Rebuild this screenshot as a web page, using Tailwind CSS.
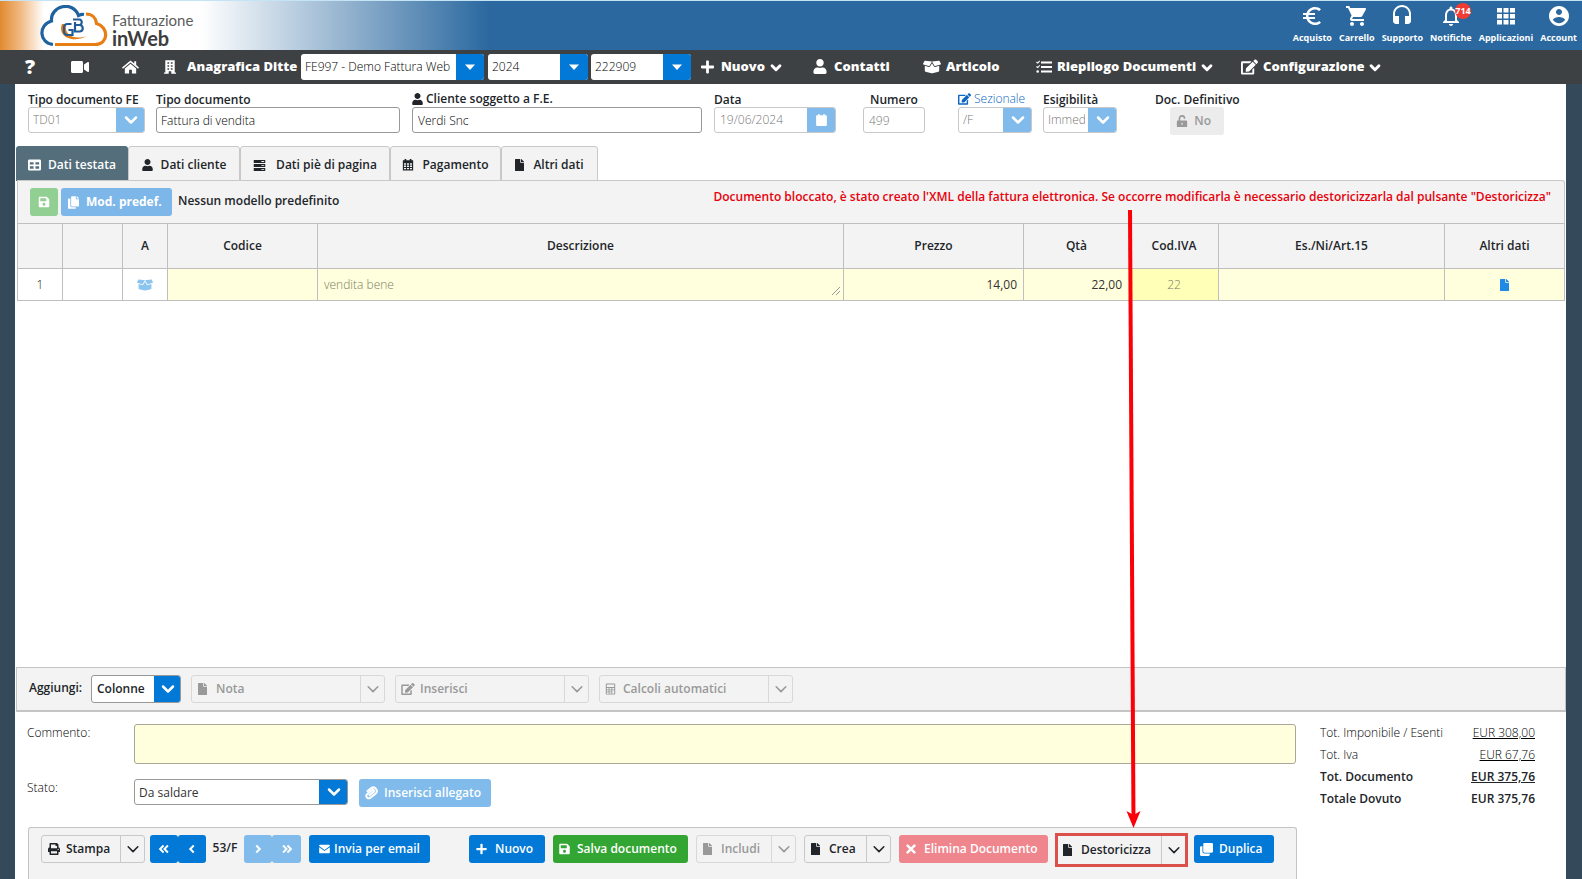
<!DOCTYPE html>
<html lang="it">
<head>
<meta charset="utf-8">
<title>Fatturazione inWeb</title>
<script src="https://cdn.jsdelivr.net/npm/@tailwindcss/browser@4"></script>
</head>
<body class="relative flex min-h-screen flex-col overflow-x-hidden bg-[#34495a] font-['Open_Sans','Noto_Sans',sans-serif] text-xs text-[#212529]">

<svg class="hidden" aria-hidden="true">
  <symbol id="user" viewBox="0 0 448 512"><path d="M224 256c70.7 0 128-57.3 128-128S294.7 0 224 0 96 57.3 96 128s57.3 128 128 128zm89.6 32h-16.7c-22.2 10.2-46.9 16-72.9 16s-50.6-5.8-72.9-16h-16.7C60.2 288 0 348.2 0 422.4V464c0 26.5 21.5 48 48 48h352c26.5 0 48-21.5 48-48v-41.6c0-74.2-60.2-134.4-134.4-134.4z"/></symbol>
  <symbol id="file" viewBox="0 0 384 512"><path d="M224 136V0H24C10.700 0 0 10.700 0 24v464c0 13.300 10.700 24 24 24h336c13.300 0 24-10.700 24-24V160H248c-13.200 0-24-10.800-24-24zm160-14.100v6.100H256V0h6.100c6.400 0 12.500 2.500 17 7l97.900 98c4.500 4.500 7 10.600 7 16.900z"/></symbol>
  <symbol id="save" viewBox="0 0 448 512"><path d="M433.941 129.941l-83.882-83.882A48 48 0 0 0 316.118 32H48C21.490 32 0 53.490 0 80v352c0 26.510 21.490 48 48 48h352c26.510 0 48-21.490 48-48V163.882a48 48 0 0 0-14.059-33.941zM224 416c-35.346 0-64-28.654-64-64 0-35.346 28.654-64 64-64s64 28.654 64 64c0 35.346-28.654 64-64 64zm96-304.520V212c0 6.627-5.373 12-12 12H76c-6.627 0-12-5.373-12-12V108c0-6.627 5.373-12 12-12h228.520c3.183 0 6.235 1.264 8.485 3.515l3.480 3.480A11.996 11.996 0 0 1 320 111.480z"/></symbol>
  <symbol id="copy" viewBox="0 0 448 512"><path d="M320 448v40c0 13.255-10.745 24-24 24H24c-13.255 0-24-10.745-24-24V120c0-13.255 10.745-24 24-24h72v296c0 30.879 25.121 56 56 56h168zm0-344V0H152c-13.255 0-24 10.745-24 24v368c0 13.255 10.745 24 24 24h272c13.255 0 24-10.745 24-24V128H344c-13.200 0-24-10.800-24-24zm120.971-31.029L375.029 7.029A24 24 0 0 0 358.059 0H352v96h96v-6.059a24 24 0 0 0-7.029-16.970z"/></symbol>
  <symbol id="clone" viewBox="0 0 512 512"><path d="M464 0c26.510 0 48 21.490 48 48v288c0 26.510-21.490 48-48 48H176c-26.510 0-48-21.490-48-48V48c0-26.510 21.490-48 48-48h288M176 416c-44.112 0-80-35.888-80-80V128H48c-26.510 0-48 21.490-48 48v288c0 26.510 21.490 48 48 48h288c26.510 0 48-21.490 48-48v-48H176z"/></symbol>
  <symbol id="plus" viewBox="0 0 448 512"><path d="M416 208H272V64c0-17.670-14.330-32-32-32h-32c-17.670 0-32 14.330-32 32v144H32c-17.670 0-32 14.330-32 32v32c0 17.670 14.330 32 32 32h144v144c0 17.670 14.330 32 32 32h32c17.670 0 32-14.330 32-32V304h144c17.670 0 32-14.330 32-32v-32c0-17.670-14.330-32-32-32z"/></symbol>
  <symbol id="video" viewBox="0 0 576 512"><path d="M336.200 64H47.800C21.400 64 0 85.400 0 111.800v288.400C0 426.600 21.400 448 47.800 448h288.400c26.400 0 47.800-21.400 47.800-47.800V111.800c0-26.400-21.400-47.800-47.800-47.800zm189.400 37.700L416 177.300v157.400l109.600 75.500c21.200 14.600 50.400-.3 50.400-25.800V127.500c0-25.400-29.100-40.400-50.400-25.800z"/></symbol>
  <symbol id="print" viewBox="0 0 512 512"><path d="M448 192V77.250c0-8.490-3.370-16.620-9.370-22.630L393.370 9.370c-6-6-14.140-9.370-22.630-9.370H96C78.330 0 64 14.330 64 32v160c-35.350 0-64 28.650-64 64v112c0 8.840 7.160 16 16 16h48v96c0 17.670 14.330 32 32 32h320c17.670 0 32-14.330 32-32v-96h48c8.840 0 16-7.160 16-16V256c0-35.350-28.650-64-64-64zm-64 256H128v-96h256v96zm0-224H128V64h192v48c0 8.840 7.160 16 16 16h48v96zm48 72c-13.250 0-24-10.750-24-24 0-13.260 10.750-24 24-24s24 10.740 24 24c0 13.250-10.750 24-24 24z"/></symbol>
  <symbol id="edit" viewBox="0 0 576 512"><path d="M402.600 83.200l90.200 90.200c3.800 3.800 3.800 10 0 13.800L274.400 405.600l-92.800 10.300c-12.400 1.400-22.900-9.100-21.500-21.500l10.300-92.800L388.800 83.200c3.800-3.800 10-3.800 13.800 0zm162-22.900l-48.800-48.800c-15.200-15.200-39.900-15.200-55.200 0l-35.400 35.400c-3.800 3.800-3.800 10 0 13.800l90.200 90.200c3.800 3.800 10 3.800 13.800 0l35.400-35.400c15.200-15.300 15.200-40 0-55.200zM384 346.200V448H64V128h229.800c3.200 0 6.200-1.300 8.500-3.500l40-40c7.600-7.600 2.200-20.500-8.500-20.500H48C21.500 64 0 85.500 0 112v352c0 26.500 21.500 48 48 48h352c26.500 0 48-21.500 48-48V306.200c0-10.700-12.900-16-20.500-8.500l-40 40c-2.200 2.300-3.500 5.300-3.500 8.500z"/></symbol>
  <symbol id="box" viewBox="0 0 640 512"><path d="M425.700 256c-16.900 0-32.800-9-41.400-23.400L320 126l-64.200 106.600c-8.700 14.500-24.600 23.500-41.500 23.500-4.500 0-9-.6-13.300-1.900L64 215v178c0 14.700 10 27.500 24.200 31l216.200 54.100c10.200 2.500 20.900 2.500 31 0L551.800 424c14.200-3.600 24.200-16.400 24.200-31V215l-137 39.100c-4.300 1.300-8.800 1.900-13.300 1.900zm212.600-112.200L586.800 41c-3.100-6.200-9.800-9.800-16.700-8.900L320 64l91.700 152.100c3.800 6.300 11.400 9.300 18.500 7.300l197.900-56.500c9.900-2.900 14.700-13.900 10.200-23.100zM53.200 41L1.700 143.800c-4.600 9.200.3 20.200 10.100 23l197.900 56.500c7.100 2 14.700-1 18.500-7.300L320 64 69.800 32.100c-6.900-.8-13.500 2.700-16.600 8.900z"/></symbol>
  <symbol id="chev" viewBox="0 0 16 16"><path d="M3 5.500l5 5 5-5" fill="none" stroke="currentColor" stroke-width="2.500" stroke-linecap="round" stroke-linejoin="round"/></symbol>
  <symbol id="chevbold" viewBox="0 0 16 16"><path d="M3.500 5.500L8 10l4.500-4.500" fill="none" stroke="currentColor" stroke-width="3.400" stroke-linecap="round" stroke-linejoin="round"/></symbol>
  <symbol id="chevthin" viewBox="0 0 16 16"><path d="M2.500 5.500L8 11l5.500-5.500" fill="none" stroke="currentColor" stroke-width="1.800" stroke-linecap="round" stroke-linejoin="round"/></symbol>
  <symbol id="caret" viewBox="0 0 16 16"><path d="M3 5.500h10L8 11z"/></symbol>
  <symbol id="home" viewBox="0 0 18 16"><path d="M9 1L0 8.600l1 1.200L9 3.200l8 6.600 1-1.200-3-2.600V2h-2v2.300z"/><path d="M9 4.500L3 9.500V15h4.500v-4h3v4H15V9.500z"/></symbol>
  <symbol id="building" viewBox="0 0 14 16"><path fill-rule="evenodd" d="M1.500 0h11v14.500H14V16H8.500v-3h-3v3H0v-1.500h1.500zM4 2.500v1.800h2V2.500zm4 0v1.800h2V2.500zM4 6v1.800h2V6zm4 0v1.800h2V6zM4 9.500v1.800h2V9.500zm4 0v1.800h2V9.500z"/></symbol>
  <symbol id="list" viewBox="0 0 16 14"><path d="M5 1.500h11v2H5zM5 6h11v2H5zM5 10.500h11v2H5z"/><path d="M0 2.500l1-1 .8.800L3.400.5l.7.700L1.800 3.800zM0 7l1-1 .8.800 1.600-1.800.7.700L1.800 8.300z"/><circle cx="1.700" cy="11.500" r="1.300"/></symbol>
  <symbol id="grid" viewBox="0 0 14 12"><path fill-rule="evenodd" d="M1.500 0h11A1.500 1.500 0 0 1 14 1.500v9a1.500 1.500 0 0 1-1.500 1.500h-11A1.500 1.500 0 0 1 0 10.500v-9A1.500 1.500 0 0 1 1.500 0zM2 3v2.500h4V3zm6 0v2.500h4V3zM2 7.300V10h4V7.300zm6 0V10h4V7.300z"/></symbol>
  <symbol id="server" viewBox="0 0 14 14"><path fill-rule="evenodd" d="M.8 1h12.400v3.200H.8zM.8 5.400h12.400v3.200H.8zM.8 9.800h12.400V13H.8zM9 2.200v.9h3v-.9zm0 4.400v.9h3v-.9zM9 11v.9h3V11z"/></symbol>
  <symbol id="calgrid" viewBox="0 0 14 14"><path fill-rule="evenodd" d="M3 0h2v1.500h4V0h2v1.500h2V13.500H1V1.500h2zM2.300 5v1.700h2.400V5zm3.500 0v1.700h2.400V5zm3.500 0v1.700h2.400V5zM2.300 7.700v1.600h2.400V7.700zm3.500 0v1.600h2.400V7.700zm3.500 0v1.600h2.400V7.700zM2.300 10.400V12h2.400v-1.600zm3.500 0V12h2.400v-1.600zm3.500 0V12h2.400v-1.600z"/></symbol>
  <symbol id="cal" viewBox="0 0 14 14"><path d="M2 2h1.500V.5h1.500V2h4V.5h1.500V2H12a.8.800 0 0 1 .8.800V12.500a1 1 0 0 1-1 1H2.200a1 1 0 0 1-1-1V2.800A.8.800 0 0 1 2 2z"/></symbol>
  <symbol id="calc" viewBox="0 0 14 14"><path fill-rule="evenodd" d="M2 0h10a1 1 0 0 1 1 1v12a1 1 0 0 1-1 1H2a1 1 0 0 1-1-1V1a1 1 0 0 1 1-1zm.3 1.300v3h9.400v-3zm0 4.400v1.800h2.300V5.700zm3.500 0v1.800h2.300V5.700zm3.500 0v1.800h2.400V5.700zm-7 2.800v1.700h2.300V8.500zm3.500 0v1.700h2.300V8.500zm-3.500 2.700V13h2.300v-1.800zm3.500 0V13h2.300v-1.800zm3.500-2.700V13h2.400V8.500z"/></symbol>
  <symbol id="unlock" viewBox="0 0 14 14"><path d="M4 7V4a3 3 0 0 1 6 0v.5" fill="none" stroke="currentColor" stroke-width="1.800"/><path fill-rule="evenodd" d="M2 6.500h10a1 1 0 0 1 1 1V13a1 1 0 0 1-1 1H2a1 1 0 0 1-1-1V7.500a1 1 0 0 1 1-1zM6.300 9v2.500h1.400V9z"/></symbol>
  <symbol id="clip" viewBox="0 0 16 16"><path d="M6 11.500l4.800-5a1.300 1.300 0 0 0-1.900-1.800L4 9.800a2.700 2.700 0 0 0 3.900 3.800l5.300-5.500a4 4 0 0 0-5.700-5.600L3 7.200" transform="rotate(8 8 8)" fill="none" stroke="currentColor" stroke-width="2.300"/></symbol>
  <symbol id="mail" viewBox="0 0 14 12"><path d="M1.200.5h11.600a1 1 0 0 1 1 1v.8L7 7.200.2 2.300v-.8a1 1 0 0 1 1-1z"/><path d="M.2 3.700L7 8.600l6.800-4.900v6.800a1 1 0 0 1-1 1H1.200a1 1 0 0 1-1-1z"/></symbol>
  <symbol id="times" viewBox="0 0 14 14"><path d="M3 3l8 8M11 3l-8 8" stroke="currentColor" stroke-width="3" stroke-linecap="round"/></symbol>
  <symbol id="left" viewBox="0 0 16 16"><path d="M10 4L6 8l4 4" fill="none" stroke="currentColor" stroke-width="2.300"/></symbol>
  <symbol id="dleft" viewBox="0 0 16 16"><path d="M7.500 4l-4 4 4 4M12.500 4l-4 4 4 4" fill="none" stroke="currentColor" stroke-width="2.200"/></symbol>
</svg>

<header class="flex h-[50px] items-center justify-between border-t border-[#c4e4f5] bg-[linear-gradient(to_right,#e18a30_0px,#f0b880_20px,#ffffff_44px,#ffffff_200px,#2a689f_490px)]">
  <a href="#" class="ml-10 flex items-center gap-1" aria-label="Fatturazione inWeb">
    <svg class="h-[42px] w-[68px]" viewBox="0 0 68 42" fill="none" stroke-width="3.200">
      <path d="M13 39.500C-1 38-2 20 11.500 16 10 1 33-5 38.500 10.500c2-1 4-1.300 5.500-1" stroke="#1f62a0"/>
      <path d="M46 9c6 0 10 4 10.500 9.500C69 22 69 39 55 39.500H15" stroke="#e87d13"/>
      <path d="M22 19c-5 12 10 20 25 12-12 4-23 0-21-12" fill="#e87d13" stroke="none"/>
      <path d="M31.500 19h-4.500a3.500 3.500 0 0 0-3 3.500v4a3.500 3.500 0 0 0 3.500 3.500h5v-5h-4M33 14.500h7a3 3 0 0 1 0 5.500h-4.500m4.500 0a3.300 3.300 0 0 1 0 6.500h-5V17" stroke="#1f5c98" stroke-width="2.200"/>
    </svg>
    <span class="flex flex-col pt-2 font-[Lato,sans-serif]">
      <span class="text-[15px] leading-[16px] text-[#5c5c5c]">Fatturazione</span>
      <span class="text-[20px] leading-[20px] font-bold text-[#3d3d3d]">inWeb</span>
    </span>
  </a>
  <nav class="mr-[5px] flex gap-[7px] pb-1 text-[9px] font-bold leading-[12px] text-white" aria-label="Servizi">
    <a href="#" class="flex flex-col items-center gap-1"><svg class="size-[24px]" fill="currentColor" viewBox="0 0 24 24"><path d="M15 18.500c-2.510 0-4.680-1.420-5.760-3.500H15v-2H8.580c-.05-.33-.08-.66-.08-1s.03-.67.08-1H15V9H9.240C10.320 6.920 12.500 5.500 15 5.500c1.610 0 3.090.59 4.230 1.570L21 5.300C19.410 3.870 17.300 3 15 3c-3.920 0-7.240 2.510-8.480 6H3v2h3.060c-.04.33-.06.66-.06 1s.02.67.06 1H3v2h3.520c1.240 3.490 4.560 6 8.480 6 2.310 0 4.410-.87 6-2.300l-1.780-1.770c-1.130.98-2.600 1.570-4.220 1.570z"/></svg>Acquisto</a>
    <a href="#" class="flex flex-col items-center gap-1"><svg class="size-[24px]" fill="currentColor" viewBox="0 0 24 24"><path d="M7 18c-1.100 0-1.990.9-1.990 2S5.900 22 7 22s2-.9 2-2-.9-2-2-2zM1 2v2h2l3.600 7.590-1.350 2.450c-.16.28-.25.61-.25.96 0 1.100.9 2 2 2h12v-2H7.420c-.14 0-.25-.11-.25-.25l.03-.12.9-1.630h7.450c.75 0 1.410-.41 1.750-1.030l3.580-6.490c.08-.14.12-.31.12-.48 0-.55-.45-1-1-1H5.210l-.94-2H1zm16 16c-1.100 0-1.990.9-1.990 2s.89 2 1.990 2 2-.9 2-2-.9-2-2-2z"/></svg>Carrello</a>
    <a href="#" class="flex flex-col items-center gap-1"><svg class="size-[24px]" fill="currentColor" viewBox="0 0 24 24"><path d="M12 1c-4.970 0-9 4.030-9 9v7c0 1.660 1.340 3 3 3h3v-8H5v-2c0-3.870 3.130-7 7-7s7 3.130 7 7v2h-4v8h3c1.660 0 3-1.340 3-3v-7c0-4.970-4.030-9-9-9z"/></svg>Supporto</a>
    <a href="#" class="relative flex flex-col items-center gap-1"><svg class="size-[24px]" fill="currentColor" viewBox="0 0 24 24"><path d="M12 22c1.100 0 2-.9 2-2h-4c0 1.100.9 2 2 2zm6-6v-5c0-3.070-1.630-5.640-4.500-6.320V4c0-.83-.67-1.500-1.500-1.500s-1.500.67-1.500 1.500v.68C7.640 5.360 6 7.920 6 11v5l-2 2v1h16v-1l-2-2zm-2 1H8v-6c0-2.480 1.510-4.500 4-4.500s4 2.020 4 4.500v6z"/></svg>Notifiche<span class="absolute -top-px left-[25px] flex size-4 items-center justify-center rounded-full bg-[#f03c32] text-[9px]">714</span></a>
    <a href="#" class="flex flex-col items-center gap-1"><svg class="size-[24px]" fill="currentColor" viewBox="0 0 24 24"><path d="M3 8.500h5V4H3zM9.500 20.500h5V16h-5zM3 20.500h5V16H3zm0-6h5V10H3zm6.500 0h5V10h-5zM16 4v4.500h5V4zM9.500 8.500h5V4h-5zm6.500 6h5V10h-5zm0 6h5V16h-5z"/></svg>Applicazioni</a>
    <a href="#" class="flex flex-col items-center gap-1"><svg class="size-[24px]" fill="currentColor" viewBox="0 0 24 24"><path d="M12 2C6.480 2 2 6.480 2 12s4.480 10 10 10 10-4.480 10-10S17.520 2 12 2zm0 3c1.660 0 3 1.340 3 3s-1.340 3-3 3-3-1.340-3-3 1.340-3 3-3zm0 14.200c-2.500 0-4.710-1.280-6-3.220.03-1.990 4-3.080 6-3.080 1.990 0 5.970 1.090 6 3.080-1.290 1.940-3.500 3.220-6 3.220z"/></svg>Account</a>
  </nav>
</header>

<nav class="flex h-[34px] items-center whitespace-nowrap bg-[#3e4143] text-[13px] font-extrabold text-white" aria-label="Menu principale">
  <a href="#" class="ml-[25px] w-[46px] text-[20px]">?</a>
  <a href="#" class="w-[51px]" aria-label="Video"><svg class="h-4 w-[18px]" fill="currentColor"><use href="#video"/></svg></a>
  <a href="#" class="w-[42px]" aria-label="Home"><svg class="h-4 w-[17px]" fill="currentColor"><use href="#home"/></svg></a>
  <a href="#" class="flex w-[137px] items-center gap-[11px]"><svg class="h-4 w-3" fill="currentColor"><use href="#building"/></svg>Anagrafica Ditte</a>
  <div class="flex h-[26px] w-[183px] overflow-hidden rounded-[3px] bg-white text-xs font-light text-black">
    <select aria-label="Ditta" class="min-w-0 flex-1 appearance-none px-1"><option>FE997 - Demo Fattura Web</option></select>
    <button aria-label="Apri ditta" class="flex w-[28px] items-center justify-center bg-[#0278d7] text-white"><svg class="size-4" fill="currentColor"><use href="#caret"/></svg></button>
  </div>
  <div class="ml-[4px] flex h-[26px] w-[100px] overflow-hidden rounded-[3px] bg-white text-xs font-light text-black">
    <select aria-label="Anno" class="min-w-0 flex-1 appearance-none px-1"><option>2024</option></select>
    <button aria-label="Apri anno" class="flex w-[28px] items-center justify-center bg-[#0278d7] text-white"><svg class="size-4" fill="currentColor"><use href="#caret"/></svg></button>
  </div>
  <div class="ml-[3px] flex h-[26px] w-[100px] overflow-hidden rounded-[3px] bg-white text-xs font-light text-black">
    <select aria-label="Codice" class="min-w-0 flex-1 appearance-none px-1"><option>222909</option></select>
    <button aria-label="Apri codice" class="flex w-[28px] items-center justify-center bg-[#0278d7] text-white"><svg class="size-4" fill="currentColor"><use href="#caret"/></svg></button>
  </div>
  <a href="#" class="ml-[10px] flex w-[112px] items-center"><svg class="mr-[7px] h-4 w-[13px]" fill="currentColor"><use href="#plus"/></svg>Nuovo<svg class="ml-[4px] mt-[3px] size-[14px]" fill="currentColor"><use href="#chevbold"/></svg></a>
  <a href="#" class="flex w-[110px] items-center gap-[7px]"><svg class="h-[15px] w-[14px]" fill="currentColor"><use href="#user"/></svg>Contatti</a>
  <a href="#" class="flex w-[113px] items-center gap-[5px]"><svg class="h-4 w-[18px]" fill="currentColor"><use href="#box"/></svg>Articolo</a>
  <a href="#" class="flex w-[205px] items-center"><svg class="mr-[5px] h-[14px] w-4" fill="currentColor"><use href="#list"/></svg>Riepilogo Documenti<svg class="ml-[4px] mt-[3px] size-[14px]" fill="currentColor"><use href="#chevbold"/></svg></a>
  <a href="#" class="flex items-center"><svg class="mr-[5px] h-4 w-[17px]" fill="currentColor"><use href="#edit"/></svg>Configurazione<svg class="ml-[3px] mt-[3px] size-[14px]" fill="currentColor"><use href="#chevbold"/></svg></a>
</nav>

<main class="mr-4 ml-[15px] flex flex-1 flex-col bg-white">
  <form class="flex h-[62px] items-start pt-[7px] pl-[13px] whitespace-nowrap">
    <div class="w-[128px]">
      <label for="tipofe" class="block h-4 font-semibold leading-[18px]">Tipo documento FE</label>
      <div class="flex h-[26px] w-[117px] overflow-hidden rounded-[3px] border border-[#c8c8c8] font-light text-[#777]">
        <select id="tipofe" disabled class="min-w-0 flex-1 appearance-none px-1"><option>TD01</option></select>
        <button type="button" disabled aria-label="Apri" class="-m-px flex w-[29px] items-center justify-center bg-[#80bbeb] text-white"><svg class="size-4"><use href="#chev"/></svg></button>
      </div>
    </div>
    <div class="w-[256px]">
      <label for="tipo" class="block h-4 font-semibold leading-[18px]">Tipo documento</label>
      <input id="tipo" value="Fattura di vendita" class="block h-[26px] w-[244px] rounded-[3px] border border-[#999] px-1 font-light text-black">
    </div>
    <div class="w-[302px]">
      <label for="cliente" class="flex h-4 items-center gap-[3px] font-semibold leading-[18px]"><svg class="h-[12px] w-[11px]" fill="currentColor"><use href="#user"/></svg>Cliente soggetto a F.E.</label>
      <input id="cliente" value="Verdi Snc" class="block h-[26px] w-[290px] rounded-[3px] border border-[#999] px-[5px] font-light text-black">
    </div>
    <div class="w-[149px]">
      <label for="data" class="block h-4 font-semibold leading-[18px]">Data</label>
      <div class="flex h-[26px] w-[122px] overflow-hidden rounded-[3px] border border-[#c8c8c8] font-light text-[#777]">
        <input id="data" disabled value="19/06/2024" class="min-w-0 flex-1 px-[5px]">
        <button type="button" disabled aria-label="Calendario" class="-m-px flex w-[29px] items-center justify-center bg-[#80bbeb] text-white"><svg class="h-[14px] w-[13px]" fill="currentColor"><use href="#cal"/></svg></button>
      </div>
    </div>
    <div class="w-[95px]">
      <label for="numero" class="block h-4 w-[62px] text-center font-semibold leading-[18px]">Numero</label>
      <input id="numero" disabled value="499" class="block h-[26px] w-[62px] rounded-[3px] border border-[#c8c8c8] px-[5px] font-light text-[#777]">
    </div>
    <div class="w-[85px]">
      <label for="sezionale" class="flex h-4 items-center gap-[3px] leading-[18px] font-light text-[#0a66c0]"><svg class="h-[12px] w-[13px]" fill="currentColor"><use href="#edit"/></svg>Sezionale</label>
      <div class="flex h-[26px] w-[74px] overflow-hidden rounded-[3px] border border-[#c8c8c8] font-light text-[#777]">
        <select id="sezionale" disabled class="min-w-0 flex-1 appearance-none px-1"><option>/F</option></select>
        <button type="button" disabled aria-label="Apri" class="-m-px flex w-[29px] items-center justify-center bg-[#80bbeb] text-white"><svg class="size-4"><use href="#chev"/></svg></button>
      </div>
    </div>
    <div class="w-[112px]">
      <label for="esig" class="block h-4 font-semibold leading-[18px]">Esigibilità</label>
      <div class="flex h-[26px] w-[74px] overflow-hidden rounded-[3px] border border-[#c8c8c8] font-light text-[#777]">
        <input id="esig" disabled value="Immediata" class="ml-1 w-[37px] min-w-0"><span class="flex-1"></span>
        <button type="button" disabled aria-label="Apri" class="-m-px flex w-[29px] items-center justify-center bg-[#80bbeb] text-white"><svg class="size-4"><use href="#chev"/></svg></button>
      </div>
    </div>
    <div class="flex flex-col items-center">
      <span class="block h-4 font-semibold leading-[18px]">Doc. Definitivo</span>
      <button type="button" disabled class="flex h-7 w-[54px] items-center gap-[6px] rounded-[3px] bg-[#ececec] px-[6px] font-semibold text-[#999]"><svg class="size-3" fill="currentColor"><use href="#unlock"/></svg>No</button>
    </div>
  </form>

  <div class="flex h-[35px] items-stretch whitespace-nowrap pl-px text-xs font-semibold [&>button]:pt-[3px]" role="tablist">
    <button role="tab" aria-selected="true" class="flex w-[112px] items-center justify-center gap-[7px] rounded-t-[3px] bg-[#546f7b] text-white"><svg class="h-3 w-[13px]" fill="currentColor"><use href="#grid"/></svg>Dati testata</button>
    <button role="tab" class="flex w-[112px] items-center justify-center gap-2 rounded-t-[3px] border border-[#c8c8c8] bg-[#f3f3f3]"><svg class="h-3 w-[11px]" fill="currentColor"><use href="#user"/></svg>Dati cliente</button>
    <button role="tab" class="flex w-[150px] items-center justify-center gap-[10px] rounded-t-[3px] border border-[#c8c8c8] bg-[#f3f3f3]"><svg class="size-[13px]" fill="currentColor"><use href="#server"/></svg>Dati piè di pagina</button>
    <button role="tab" class="flex w-[111px] items-center justify-center gap-[8px] rounded-t-[3px] border border-[#c8c8c8] bg-[#f3f3f3]"><svg class="size-3" fill="currentColor"><use href="#calgrid"/></svg>Pagamento</button>
    <button role="tab" class="flex w-[97px] items-center justify-center gap-[9px] rounded-t-[3px] border border-[#c8c8c8] bg-[#f3f3f3]"><svg class="h-3 w-[9px]" fill="currentColor"><use href="#file"/></svg>Altri dati</button>
  </div>

  <section class="mr-px ml-[2px] flex flex-1 flex-col">
    <div class="flex h-[42px] items-start rounded-tr-[3px] border-x border-[#c8c8c8] bg-[#f3f3f3] pt-[7px] pl-3 shadow-[0_-1px_0_#c8c8c8]">
      <button disabled aria-label="Salva modello" class="flex h-7 w-7 items-center justify-center rounded-[3px] bg-[#92cf92] text-white"><svg class="size-3" fill="currentColor"><use href="#save"/></svg></button>
      <button disabled class="ml-[3px] flex h-7 w-[111px] items-center gap-[7px] rounded-[3px] bg-[#7db6e8] pl-[7px] font-bold text-white"><svg class="h-[13px] w-[11px]" fill="currentColor"><use href="#copy"/></svg>Mod. predef.</button>
      <span class="ml-[6px] leading-[26px] font-semibold">Nessun modello predefinito</span>
      <p class="mr-[13px] ml-auto leading-[18px] font-semibold whitespace-nowrap text-[#e8000b]">Documento bloccato, è stato creato l'XML della fattura elettronica. Se occorre modificarla è necessario destoricizzarla dal pulsante "Destoricizza"</p>
    </div>
    <table class="w-full table-fixed border-collapse text-xs">
      <colgroup><col class="w-[45px]"><col class="w-[60px]"><col class="w-[45px]"><col class="w-[150px]"><col><col class="w-[180px]"><col class="w-[106px]"><col class="w-[89px]"><col class="w-[226px]"><col class="w-[120px]"></colgroup>
      <thead>
        <tr class="h-[45px] bg-[#f3f3f3] [&>th]:border [&>th]:border-[#bfbfbf] [&>th]:font-semibold">
          <th></th><th></th><th>A</th><th>Codice</th><th>Descrizione</th><th>Prezzo</th><th>Qtà</th><th>Cod.IVA</th><th>Es./Ni/Art.15</th><th>Altri dati</th>
        </tr>
      </thead>
      <tbody>
        <tr class="h-[32px] [&>td]:border [&>td]:border-[#bfbfbf]">
          <td class="text-center font-light text-[#222]">1</td>
          <td></td>
          <td><svg class="mx-auto h-[14px] w-4 text-[#8cc4f0]" fill="currentColor"><use href="#box"/></svg></td>
          <td class="bg-[#ffffde]"></td>
          <td class="bg-[#ffffde] pr-[2px] pl-[6px] font-light text-[#7c7c64]"><div class="flex items-center justify-between"><span>vendita bene</span><svg class="mt-3 size-[10px]" viewBox="0 0 10 10" stroke="#999"><path d="M1 9l8-8M5 9l4-4"/></svg></div></td>
          <td class="bg-[#ffffde] pr-[6px] text-right text-[#333]">14,00</td>
          <td class="bg-[#ffffde] pr-[7px] text-right text-[#333]">22,00</td>
          <td class="bg-[#ffffb8] text-center font-light text-[#7c7c64]">22</td>
          <td class="bg-[#ffffde]"></td>
          <td class="bg-[#ffffde]"><svg class="mx-auto h-3 w-[9px] text-[#1f8ae6]" fill="currentColor"><use href="#file"/></svg></td>
        </tr>
      </tbody>
    </table>
  </section>

  <section class="ml-px flex h-[45px] items-start border border-b-2 border-[#c4c4c4] bg-[#f3f3f3] pt-[7px] pl-3 whitespace-nowrap">
    <span class="w-[62px] leading-[26px] font-semibold">Aggiungi:</span>
    <div class="flex h-7 w-[90px] overflow-hidden rounded-[3px] border border-[#999] bg-white">
      <button class="flex-1 pl-[5px] text-left font-semibold">Colonne</button>
      <button aria-label="Apri colonne" class="-m-px flex w-[27px] items-center justify-center bg-[#0278d7] text-white"><svg class="size-4"><use href="#chev"/></svg></button>
    </div>
    <div class="ml-[10px] flex h-7 w-[194px] rounded-[3px] border border-[#d8d8d8] font-semibold text-[#999]">
      <button disabled class="flex flex-1 items-center gap-[9px] pl-[6px]"><svg class="h-3 w-[9px]" fill="currentColor"><use href="#file"/></svg>Nota</button>
      <button disabled aria-label="Apri nota" class="flex w-6 items-center justify-center border-l border-[#d8d8d8]"><svg class="size-[14px]"><use href="#chevthin"/></svg></button>
    </div>
    <div class="ml-[10px] flex h-7 w-[194px] rounded-[3px] border border-[#d8d8d8] font-semibold text-[#999]">
      <button disabled class="flex flex-1 items-center gap-[5px] pl-[5px]"><svg class="h-3 w-[14px]" fill="currentColor"><use href="#edit"/></svg>Inserisci</button>
      <button disabled aria-label="Apri inserisci" class="flex w-6 items-center justify-center border-l border-[#d8d8d8]"><svg class="size-[14px]"><use href="#chevthin"/></svg></button>
    </div>
    <div class="ml-[10px] flex h-7 w-[194px] rounded-[3px] border border-[#d8d8d8] font-semibold text-[#999]">
      <button disabled class="flex flex-1 items-center gap-[7px] pl-[5px]"><svg class="h-3 w-[11px]" fill="currentColor"><use href="#calc"/></svg>Calcoli automatici</button>
      <button disabled aria-label="Apri calcoli" class="flex w-6 items-center justify-center border-l border-[#d8d8d8]"><svg class="size-[14px]"><use href="#chevthin"/></svg></button>
    </div>
  </section>

  <section class="flex flex-none">
    <div class="flex flex-1 flex-col pt-3 pl-3">
      <div class="flex items-start">
        <label for="commento" class="w-[107px] leading-[18px] font-light text-black">Commento:</label>
        <textarea id="commento" class="block h-10 flex-1 resize-none rounded-[3px] border border-[#a8a898] bg-[#ffffde]"></textarea>
      </div>
      <div class="mt-[15px] flex items-start">
        <label for="stato" class="w-[107px] leading-[18px] font-light text-black">Stato:</label>
        <div class="flex h-[26px] w-[214px] overflow-hidden rounded-[3px] border border-[#999] text-[#333]">
          <select id="stato" class="min-w-0 flex-1 appearance-none px-1 pt-[2px]"><option>Da saldare</option></select>
          <button aria-label="Apri stato" class="-m-px flex w-[29px] items-center justify-center bg-[#0278d7] text-white"><svg class="size-4"><use href="#chev"/></svg></button>
        </div>
        <button disabled class="ml-[11px] flex h-7 w-[132px] items-center gap-[6px] rounded-[3px] bg-[#80bbeb] pl-[5px] font-semibold text-white"><svg class="size-[14px]"><use href="#clip"/></svg>Inserisci allegato</button>
      </div>
      <div class="-mr-px mt-5 ml-px flex h-[52px] items-start rounded-t-[3px] border border-b-0 border-[#c4c4c4] bg-[#f3f3f3] pt-[7px] pl-3 font-semibold whitespace-nowrap">
        <div class="flex h-7 w-[104px] rounded-[3px] border border-[#c8c8c8]">
          <button class="flex flex-1 items-center gap-[6px] pl-[6px]"><svg class="h-3 w-3" fill="currentColor"><use href="#print"/></svg>Stampa</button>
          <button aria-label="Apri stampa" class="flex w-6 items-center justify-center border-l border-[#c8c8c8]"><svg class="size-[14px]"><use href="#chevthin"/></svg></button>
        </div>
        <button aria-label="Primo" class="ml-[5px] flex h-7 w-7 items-center justify-center rounded-[3px] bg-[#0278d7] text-white"><svg class="size-[14px]"><use href="#dleft"/></svg></button>
        <button aria-label="Precedente" class="flex h-7 w-7 items-center justify-center rounded-[3px] bg-[#0278d7] text-white"><svg class="size-[14px]"><use href="#left"/></svg></button>
        <span class="w-[38px] text-center leading-[26px]">53/F</span>
        <button disabled aria-label="Successivo" class="flex h-7 w-7 items-center justify-center rounded-[3px] bg-[#80bbeb] text-white"><svg class="size-[14px] rotate-180"><use href="#left"/></svg></button>
        <button disabled aria-label="Ultimo" class="flex h-7 w-[29px] items-center justify-center rounded-[3px] bg-[#80bbeb] text-white"><svg class="size-[14px] rotate-180"><use href="#dleft"/></svg></button>
        <button class="ml-2 flex h-7 w-[121px] items-center justify-center gap-1 rounded-[3px] bg-[#0278d7] font-semibold text-white"><svg class="h-[10px] w-[11px]" fill="currentColor"><use href="#mail"/></svg>Invia per email</button>
        <button class="ml-[39px] flex h-7 w-[76px] items-center gap-2 rounded-[3px] bg-[#0278d7] pl-[7px] font-semibold text-white"><svg class="h-3 w-[11px]" fill="currentColor"><use href="#plus"/></svg>Nuovo</button>
        <button class="ml-2 flex h-7 w-[135px] items-center gap-[7px] rounded-[3px] bg-[#33a532] pl-[6px] font-semibold text-white"><svg class="h-3 w-[11px]" fill="currentColor"><use href="#save"/></svg>Salva documento</button>
        <div class="ml-2 flex h-7 w-[100px] rounded-[3px] border border-[#d8d8d8] text-[#999]">
          <button disabled class="flex flex-1 items-center gap-[9px] pl-[6px]"><svg class="h-3 w-[9px]" fill="currentColor"><use href="#file"/></svg>Includi</button>
          <button disabled aria-label="Apri includi" class="flex w-6 items-center justify-center border-l border-[#d8d8d8]"><svg class="size-[14px]"><use href="#chevthin"/></svg></button>
        </div>
        <div class="ml-2 flex h-7 w-[87px] rounded-[3px] border border-[#c8c8c8]">
          <button class="flex flex-1 items-center gap-[9px] pl-[6px]"><svg class="h-3 w-[9px]" fill="currentColor"><use href="#file"/></svg>Crea</button>
          <button aria-label="Apri crea" class="flex w-6 items-center justify-center border-l border-[#c8c8c8]"><svg class="size-[14px]"><use href="#chevthin"/></svg></button>
        </div>
        <button disabled class="ml-2 flex h-7 w-[149px] items-center gap-[7px] rounded-[3px] bg-[#f0868d] pl-[6px] font-semibold text-white"><svg class="size-3"><use href="#times"/></svg>Elimina Documento</button>
        <div class="-mt-[2px] ml-[7px] flex h-[34px] w-[133px] border-[3px] border-[#dc504b]">
          <button class="flex flex-1 items-center gap-[9px] pl-[5px]"><svg class="h-3 w-[9px]" fill="currentColor"><use href="#file"/></svg>Destoricizza</button>
          <button aria-label="Apri destoricizza" class="flex w-6 items-center justify-center border-l border-[#c8c8c8]"><svg class="size-[14px]"><use href="#chevthin"/></svg></button>
        </div>
        <button class="ml-[6px] flex h-7 w-20 items-center gap-[6px] rounded-[3px] bg-[#0278d7] pl-[6px] font-semibold text-white"><svg class="size-[13px]" fill="currentColor"><use href="#clone"/></svg>Duplica</button>
      </div>
    </div>
    <dl class="ml-6 mr-[31px] grid h-[100px] w-[215px] grid-cols-[1fr_auto] content-start pt-[10px] leading-[22px] font-light text-black">
      <dt>Tot. Imponibile / Esenti</dt><dd class="text-right underline">EUR 308,00</dd>
      <dt>Tot. Iva</dt><dd class="text-right underline">EUR 67,76</dd>
      <dt class="font-semibold text-[#212529]">Tot. Documento</dt><dd class="text-right font-semibold text-[#212529] underline">EUR 375,76</dd>
      <dt class="font-semibold text-[#212529]">Totale Dovuto</dt><dd class="text-right font-semibold text-[#212529]">EUR 375,76</dd>
    </dl>
  </section>
</main>

<svg class="pointer-events-none absolute top-[210px] left-[1120px] h-[618px] w-[28px]" viewBox="0 0 28 618" fill="none" stroke="#fb0007" aria-hidden="true">
  <path d="M10 0L13.500 612" stroke-width="4"/>
  <path d="M13.500 618L6.500 601l7 4 7-4z" fill="#fb0007" stroke="none"/>
</svg>
</body>
</html>
